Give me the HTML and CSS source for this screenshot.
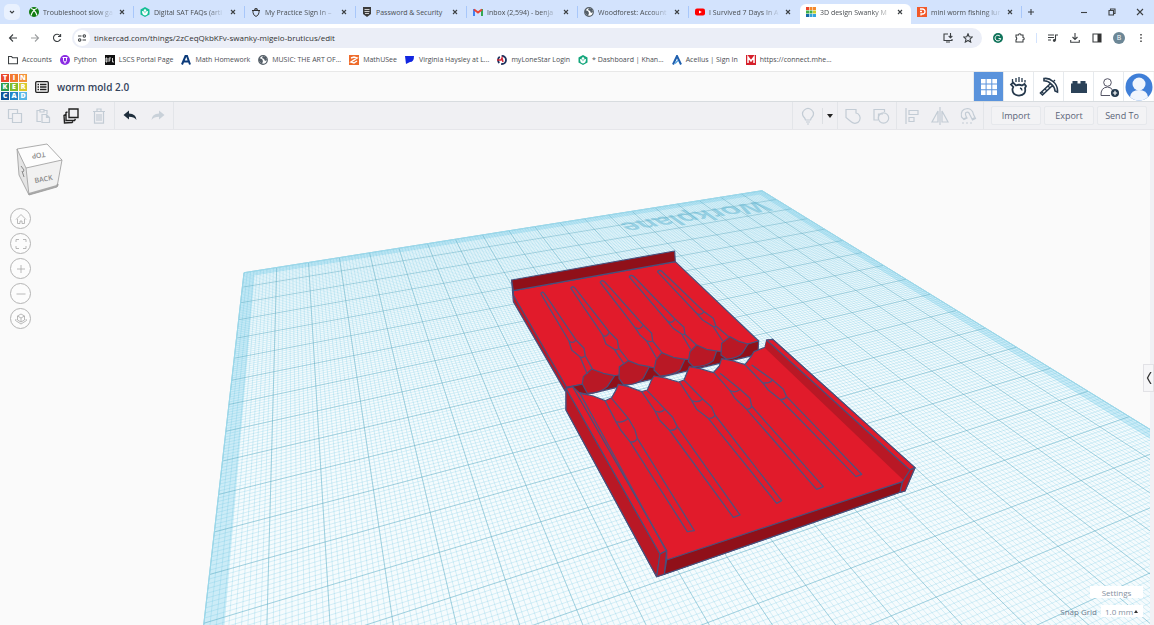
FILE: index.html
```
<!DOCTYPE html>
<html lang="en">
<head>
    <meta charset="UTF-8">
    <title>3D design Swanky Migelo-Bruticus</title>
    <link rel="stylesheet" href="styles.css">
</head>
<body>
    <!-- browser tabs -->
    <div class="tabs">
        <button class="tab_list" aria-label="Search tabs"><svg class="ic8" viewBox="0 0 8 8"><path d="M2 3l2 2 2-2" class="ln"/></svg></button>
        <div class="tab">
            <svg class="ic10" viewBox="0 0 10 10"><circle cx="5" cy="5" r="5" fill="#107c10"/><path d="M2 1.500Q4 2 5 3 6 2 8 1.500M2 8.500Q3 5 5 3.500 7 5 8 8.500" fill="none" stroke="#fff" stroke-width="1.200"/></svg>
            <a href="#" class="tab_name">Troubleshoot slow ga</a><button class="close" aria-label="Close"><svg class="ic8" viewBox="0 0 8 8"><path d="M2 2l4 4M6 2L2 6" class="ln"/></svg></button>
        </div>
        <div class="tab">
            <svg class="ic10" viewBox="0 0 10 10"><path d="M5 0l4.500 2.500v5L5 10 .5 7.500v-5z" fill="#14bf96"/><circle cx="5" cy="3.500" r="1.300" fill="#fff"/><path d="M2 4q3 0 3 3 0-3 3-3 0 4-3 4.500Q2 8 2 4" fill="#fff"/></svg>
            <a href="#" class="tab_name">Digital SAT FAQs (arti</a><button class="close" aria-label="Close"><svg class="ic8" viewBox="0 0 8 8"><path d="M2 2l4 4M6 2L2 6" class="ln"/></svg></button>
        </div>
        <div class="tab">
            <svg class="ic10" viewBox="0 0 10 10"><path d="M2 3.500h6v2Q8 8 5 9.500 2 8 2 5.500zM1 3.500h8M5 3.500V1M3 2.500Q5 .5 7 2.500" fill="none" stroke="#333" stroke-width="1"/></svg>
            <a href="#" class="tab_name">My Practice Sign In –</a><button class="close" aria-label="Close"><svg class="ic8" viewBox="0 0 8 8"><path d="M2 2l4 4M6 2L2 6" class="ln"/></svg></button>
        </div>
        <div class="tab">
            <svg class="ic10" viewBox="0 0 10 10"><path d="M1 0h8v7L5 10 1 7z" fill="#3c3c3c"/><path d="M2.500 2.500h5M2.500 4.500h5M3 6.500h4" stroke="#ccc"/></svg>
            <a href="#" class="tab_name plain">Password &amp; Security</a><button class="close" aria-label="Close"><svg class="ic8" viewBox="0 0 8 8"><path d="M2 2l4 4M6 2L2 6" class="ln"/></svg></button>
        </div>
        <div class="tab">
            <svg class="ic10" viewBox="0 0 10 10"><path d="M1 9V2" stroke="#4285f4" stroke-width="2"/><path d="M9 9V2" stroke="#34a853" stroke-width="2"/><path d="M1 2.500l4 3 4-3" fill="none" stroke="#ea4335" stroke-width="2"/></svg>
            <a href="#" class="tab_name">Inbox (2,594) - benja</a><button class="close" aria-label="Close"><svg class="ic8" viewBox="0 0 8 8"><path d="M2 2l4 4M6 2L2 6" class="ln"/></svg></button>
        </div>
        <div class="tab">
            <svg class="ic10" viewBox="0 0 10 10"><circle cx="5" cy="5" r="4.300" fill="#fff" stroke="#555f68" stroke-width="1.200"/><path d="M1 3l3 1 1 2-1 3-3-3zM5 1l3 1 1 3-2 1-1-2-2-1z" fill="#555f68"/></svg>
            <a href="#" class="tab_name">Woodforest: Account</a><button class="close" aria-label="Close"><svg class="ic8" viewBox="0 0 8 8"><path d="M2 2l4 4M6 2L2 6" class="ln"/></svg></button>
        </div>
        <div class="tab">
            <svg class="ic10" viewBox="0 0 10 10"><rect y="1.500" width="10" height="7" rx="2" fill="#f00"/><path d="M4 3.500v3L6.800 5z" fill="#fff"/></svg>
            <a href="#" class="tab_name">I Survived 7 Days In A</a><button class="close" aria-label="Close"><svg class="ic8" viewBox="0 0 8 8"><path d="M2 2l4 4M6 2L2 6" class="ln"/></svg></button>
        </div>
        <div class="tab active">
            <svg class="ic10" viewBox="0 0 10 10"><path d="M0 0h3v3H0z" fill="#e8452c"/><path d="M3.500 0h3v3h-3zM7 0h3v3H7z" fill="#f48a2d"/><path d="M0 3.500h3v3H0zM3.500 3.500h3v3h-3z" fill="#3fae49"/><path d="M7 3.500h3v3H7z" fill="#c9ce2c"/><path d="M0 7h3v3H0z" fill="#1569a8"/><path d="M3.500 7h3v3h-3zM7 7h3v3H7z" fill="#35a3dc"/></svg>
            <a href="#" class="tab_name">3D design Swanky M</a><button class="close" aria-label="Close"><svg class="ic8" viewBox="0 0 8 8"><path d="M2 2l4 4M6 2L2 6" class="ln"/></svg></button>
        </div>
        <div class="tab last">
            <svg class="ic10" viewBox="0 0 10 10"><path d="M0 0h10v10H0z" fill="#f1592a"/><path d="M3 2h2.500a2.500 2.500 0 010 5H4v1.500M3 4.500h2" fill="none" stroke="#fff" stroke-width="1.300"/></svg>
            <a href="#" class="tab_name">mini worm fishing lur</a><button class="close" aria-label="Close"><svg class="ic8" viewBox="0 0 8 8"><path d="M2 2l4 4M6 2L2 6" class="ln"/></svg></button>
        </div>
        <button class="new_tab" aria-label="New tab"><svg class="ic8" viewBox="0 0 8 8"><path d="M4 1v6M1 4h6" class="ln"/></svg></button>
        <div class="win">
            <button aria-label="Minimize"><svg class="ic8" viewBox="0 0 8 8"><path d="M1 4.500h6" class="ln"/></svg></button>
            <button aria-label="Restore"><svg class="ic8" viewBox="0 0 8 8"><path d="M1 2.500h4.500V7H1zM2.500 2.500V1H7v4.500H5.500" class="ln"/></svg></button>
            <button aria-label="Close window"><svg class="ic8" viewBox="0 0 8 8"><path d="M1 1l6 6M7 1L1 7" class="ln"/></svg></button>
        </div>
    </div>

    <!-- address bar -->
    <div class="nav">
        <button aria-label="Back"><svg class="ic10" viewBox="0 0 10 10"><path d="M9 5H1.500M5 1.500L1.500 5 5 8.500" class="ln"/></svg></button>
        <button aria-label="Forward"><svg class="ic10 pale" viewBox="0 0 10 10"><path d="M1 5h7.500M5 1.500L8.500 5 5 8.500" class="ln"/></svg></button>
        <button aria-label="Reload"><svg class="ic10" viewBox="0 0 10 10"><path d="M8.500 6A3.600 3.600 0 118 2.800M8.600 1v2.500H6" class="ln"/></svg></button>
        <div class="omnibox">
            <span class="site"><svg class="ic10" viewBox="0 0 10 10"><path d="M1 3h3.500M5.500 7H9" class="ln"/><circle cx="7.300" cy="3" r="1.200" class="ln"/><circle cx="2.700" cy="7" r="1.200" class="ln"/></svg></span>
            <input class="url" type="text" aria-label="Address" value="tinkercad.com/things/2zCeqQkbKFv-swanky-migelo-bruticus/edit">
            <button aria-label="Install"><svg class="ic10" viewBox="0 0 10 10"><path d="M5 1H1v6.500h8V6M3 9h4M7.500 0v4.500M5.700 3l1.800 1.800L9.300 3" class="ln"/></svg></button>
            <button aria-label="Bookmark"><svg class="ic10" viewBox="0 0 10 10"><path d="M5 .8l1.200 2.900 3.100.3L7 6.100l.7 3L5 7.500 2.300 9.100l.7-3L.7 4l3.100-.3z" class="ln"/></svg></button>
        </div>
        <div class="ext">
            <button aria-label="Grammarly"><svg class="ic10" viewBox="0 0 10 10"><circle cx="5" cy="5" r="5" fill="#11745b"/><path d="M7 3.200A2.800 2.800 0 107.700 5.500H5.500" fill="none" stroke="#fff"/></svg></button>
            <button aria-label="Extensions"><svg class="ic10" viewBox="0 0 10 10"><path d="M1 2h2.500a1.200 1.200 0 012.500 0H8v2.500a1.200 1.200 0 010 2.400V9H1V7q1.500-1.500 0-3z" class="ln"/></svg></button>
            <i class="bar"></i>
            <button aria-label="Media"><svg class="ic10" viewBox="0 0 10 10"><path d="M0 2h6M0 4.500h6M0 7h3M7.500 7.500V2H10" class="ln"/><circle cx="6.300" cy="7.500" r="1.400" fill="#3c4043"/></svg></button>
            <button aria-label="Downloads"><svg class="ic10" viewBox="0 0 10 10"><path d="M5 0v6.500M2.500 4L5 6.500 7.500 4M.7 7v2.300h8.600V7" class="ln"/></svg></button>
            <button aria-label="Side panel"><svg class="ic10" viewBox="0 0 10 10"><path d="M1 1h8v8H1z" class="ln"/><path d="M5.500 1H9v8H5.500z" fill="#333"/></svg></button>
            <button class="profile" aria-label="Profile">B</button>
            <button aria-label="Menu"><svg class="ic10" viewBox="0 0 10 10"><path d="M4.300 1h1.400v1.400H4.300zM4.300 4.300h1.400v1.400H4.300zM4.300 7.600h1.400V9H4.300z" fill="#333"/></svg></button>
        </div>
    </div>

    <!-- bookmarks -->
    <div class="marks">
        <a href="#"><svg class="ic10" viewBox="0 0 10 10"><path d="M.5 1.500h3l1 1.200h5v6h-9z" class="ln"/></svg>Accounts</a>
        <a href="#"><svg class="ic10" viewBox="0 0 10 10"><circle cx="5" cy="5" r="5" fill="#8a2be2"/><path d="M3.500 3v2.500a1.500 1.500 0 003 0V3M5 7v1.500M2.500 2.500h5" fill="none" stroke="#fff"/></svg>Python</a>
        <a href="#"><svg class="ic10" viewBox="0 0 10 10"><path d="M0 0h10v10H0z" fill="#111"/><path d="M1 3v4h1V3zM4 7V3h2M4 5h1.500M7.500 3v4H9" fill="none" stroke="#fff" stroke-width=".8"/></svg>LSCS Portal Page</a>
        <a href="#"><svg class="ic10" viewBox="0 0 10 10"><path d="M1 9.500L4.500 1h1.500L9 9.500M2.500 6.500H8" fill="none" stroke="#0b3a7a" stroke-width="2"/></svg>Math Homework</a>
        <a href="#"><svg class="ic10" viewBox="0 0 10 10"><circle cx="5" cy="5" r="4.300" fill="#fff" stroke="#555f68" stroke-width="1.200"/><path d="M1 3l3 1 1 2-1 3-3-3zM5 1l3 1 1 3-2 1-1-2-2-1z" fill="#555f68"/></svg>MUSIC: THE ART OF...</a>
        <a href="#"><svg class="ic10" viewBox="0 0 10 10"><path d="M0 0h10v10H0z" fill="#ee6c2c"/><path d="M2 3l3-1 3 1-6 4 3 1 3-2" fill="none" stroke="#fff" stroke-width="1.500"/></svg>MathUSee</a>
        <a href="#"><svg class="ic10" viewBox="0 0 10 10"><path d="M0 1h9q0 6-4 6l-4 2z" fill="#1226e0"/></svg>Virginia Haysley at L...</a>
        <a href="#"><svg class="ic10" viewBox="0 0 10 10"><circle cx="5" cy="5" r="4" fill="none" stroke="#1b2f5c" stroke-width="1.800" stroke-dasharray="7 2"/><path d="M0 5h4l1-2 1 4" stroke="#d22b3a" stroke-width="1.500" fill="none"/></svg>myLoneStar Login</a>
        <a href="#"><svg class="ic10" viewBox="0 0 10 10"><path d="M5 0l4.500 2.500v5L5 10 .5 7.500v-5z" fill="#14a67c"/><circle cx="5" cy="3.500" r="1.300" fill="#fff"/><path d="M2 4q3 0 3 3 0-3 3-3 0 4-3 4.500Q2 8 2 4" fill="#fff"/></svg>* Dashboard | Khan...</a>
        <a href="#"><svg class="ic10" viewBox="0 0 10 10"><path d="M1 9.500L5 1l4 8.500" fill="none" stroke="#1f5fae" stroke-width="2"/><path d="M3 8.500l3-3" stroke="#4ba0e0" stroke-width="1.300"/></svg>Acellus | Sign In</a>
        <a href="#"><svg class="ic10" viewBox="0 0 10 10"><path d="M0 0h10v10H0z" fill="#d6202b"/><path d="M2 8V2l3 4 3-4v6" fill="none" stroke="#fff" stroke-width="1.500"/></svg>https://connect.mhe...</a>
    </div>

    <!-- tinkercad header -->
    <header class="top">
        <div class="logo">
            <span class="t1">T</span><span class="t2">I</span><span class="t3">N</span>
            <span class="t4">K</span><span class="t5">E</span><span class="t6">R</span>
            <span class="t7">C</span><span class="t8">A</span><span class="t9">D</span>
        </div>
        <button class="list" aria-label="Designs"><svg class="ic14" viewBox="0 0 14 12"><rect x=".7" y=".7" width="12.600" height="10.600" rx="1" fill="none" stroke="#222" stroke-width="1.300"/><path d="M2.500 3.500H4M2.500 6H4M2.500 8.500H4M5 3.500h6.500M5 6h6.500M5 8.500h6.500" stroke="#222" stroke-width="1.300"/></svg></button>
        <h1 class="title">worm mold 2.0</h1>
        <div class="modes">
            <button class="on" aria-label="3D view"><svg class="ic16" viewBox="0 0 16 16"><path d="M0 0h4.600v4.600H0zM5.600 0h4.700v4.600H5.600zM11.300 0H16v4.600h-4.700zM0 5.600h4.600v4.700H0zM5.600 5.600h4.700v4.700H5.600zM11.300 5.600H16v4.700h-4.700zM0 11.300h4.600V16H0zM5.600 11.300h4.700V16H5.600zM11.300 11.300H16V16h-4.700z" fill="#fff"/></svg></button>
            <button aria-label="Sim lab"><svg class="ic20" viewBox="0 0 20 20"><path d="M7 8.500q3-1.500 6 0l2.500-1.500 1.500 2-1 2q1.500 7-6 7.700-7-.7-6.500-6.700l.8-2-2.300-2.500L4 5.500z" fill="none" stroke="#26394d" stroke-width="1.800"/><path d="M10 0v5M7 1v4M13 1v4M3.500 2v3M16 3v2.500M11 11q2 .5 2 2.500" fill="none" stroke="#26394d" stroke-width="1.300"/></svg></button>
            <button aria-label="Blocks"><svg class="ic20" viewBox="0 0 20 20"><path d="M5 1.500q5-.8 9 3 5 4 4.500 10.500l-2.500-1Q15.500 9.500 12 7 9.500 4 5 3.800zM11 7L1.500 16l2 2L13.500 8.500" fill="#fff" stroke="#26394d" stroke-width="1.600"/><path d="M3 15l2 2M6 12l2 2M9 9l2 2M14 5l2-2" stroke="#26394d" stroke-width="1.200"/></svg></button>
            <button aria-label="Bricks"><svg class="ic16" viewBox="0 0 16 16"><path d="M0 14V4.500h1.500V2h5v2.500h3V2h5v2.500H16V14z" fill="#2b4258"/></svg></button>
            <button aria-label="Invite"><svg class="ic20" viewBox="0 0 20 20"><circle cx="8.500" cy="5.500" r="3.800" fill="none" stroke="#556" stroke-width="1"/><path d="M11 18.500H2q-.5-8 6.500-8.500 4 0 5.500 4" fill="none" stroke="#556" stroke-width="1"/><circle cx="16" cy="16" r="4" fill="#22384c"/><path d="M16 13.800v4.400M13.800 16h4.400" stroke="#fff" stroke-width="1.200"/></svg></button>
            <button class="avatar" aria-label="Account"><svg class="ic28" viewBox="0 0 28 28"><circle cx="14" cy="14" r="13.500" fill="#3f7fd8"/><circle cx="14" cy="11" r="6.500" fill="#f0f5fd"/><path d="M5 24q1-7 9-7t9 7q-4 3.500-9 3.500T5 24" fill="#f0f5fd"/></svg></button>
        </div>
    </header>

    <!-- edit toolbar -->
    <div class="tools">
        <div class="group">
            <button aria-label="Copy"><svg class="ic16 off" viewBox="0 0 16 16"><path d="M5.500 5.500h9v9h-9zM5 10.500H1.500v-9h9V5"/></svg></button>
            <button aria-label="Paste"><svg class="ic16 off" viewBox="0 0 16 16"><path d="M6 13.500H2v-11h3M9 2.500h3V6M5 1.500h4v2.500H5zM7 6.500h4.500l3 3v5H7zM11.500 6.500v3h3"/></svg></button>
            <button aria-label="Duplicate"><svg class="ic16" viewBox="0 0 16 16"><path d="M6 1h9v8.500H6zM4.500 4L3 4.500v8h8.500l1-1.500M3 6.500l-2 1 .5 7.500 7.500-.5 1-1" fill="none" stroke="#222" stroke-width="1.400"/></svg></button>
            <button aria-label="Delete"><svg class="ic16 off" viewBox="0 0 16 16"><path d="M2 3.500h12M6 3V1h4v2M3.500 3.500v11.700h9V3.500M6 6v7M8 6v7M10 6v7"/></svg></button>
        </div>
        <div class="group">
            <button aria-label="Undo"><svg class="ic16" viewBox="0 0 16 16"><path d="M1.500 7L7 2.500v3q7 0 7.500 6.500Q12 8.800 7 8.800v2.700z" fill="#1f2e3c"/></svg></button>
            <button aria-label="Redo"><svg class="ic16" viewBox="0 0 16 16"><path d="M14.500 7L9 2.500v3Q2 5.500 1.500 12 4 8.800 9 8.800v2.700z" fill="#c9d1d9"/></svg></button>
        </div>
        <div class="group right">
            <button aria-label="Show hidden"><svg class="ic18 off" viewBox="0 0 18 18"><path d="M6.500 13Q6 11 4.600 9.800A5.300 5.300 0 1113.400 9.800Q12 11 11.500 13zM7 15h4M8 17h2"/></svg></button>
            <button class="caret" aria-label="More"><svg class="ic8" viewBox="0 0 8 8"><path d="M1 2h6L4 6z" fill="#222"/></svg></button>
        </div>
        <div class="group">
            <button aria-label="Group"><svg class="ic18 off" viewBox="0 0 18 18"><path d="M2 2.500h10V6a5.200 5.200 0 11-4.500 9L5 13 2 10.500z"/></svg></button>
            <button aria-label="Ungroup"><svg class="ic18 off" viewBox="0 0 18 18"><path d="M6 13H2V2.500h10.500V5M6.500 13V7H11"/><circle cx="11.500" cy="11" r="5.200"/></svg></button>
        </div>
        <div class="group">
            <button aria-label="Align"><svg class="ic18 off" viewBox="0 0 18 18"><path d="M3 1v16M6 3.500h9v4H6zM6 10.500h5v4H6z"/></svg></button>
            <button aria-label="Mirror"><svg class="ic18 off" viewBox="0 0 18 18"><path d="M9 0v18M7 4v11H1zM11 4v11h6z"/></svg></button>
            <button aria-label="Cruise"><svg class="ic18 off" viewBox="0 0 18 18"><path d="M5 12.500L2.500 10Q1 2 8.500 1.500q5 .5 6 6l2 4-3 1.500-2.500-5Q9.500 4 7 5.500q-1.500 1.500 1 5.500zM4.500 12l3-1.500M13 12l3-1.500"/><path d="M3 16h12" stroke-dasharray="2 2"/></svg></button>
        </div>
        <div class="acts">
            <button>Import</button><button>Export</button><button>Send To</button>
        </div>
    </div>

    <main class="view">
        <svg class="scene" viewBox="0 130 1150 495" preserveAspectRatio="xMidYMin slice">
            <path id="plane" class="plane"/>
            <path id="band" class="band"/>
            <path id="minor" class="minor"/>
            <path id="major" class="major"/>
            <path id="edge" class="edge"/>
            <text class="wp" transform="matrix(-1 .16 -.7 -.48 760 201)">Workplane</text>

            <!-- back half of the mold -->
            <g class="part" transform="translate(500 240) scale(.3333)">
                <path class="mid" d="M35 120L40 185 195 452 235 460 245 432 40 152z"/>
                <path class="red" d="M40 152L526 65 776 303 744 312 690 340 250 432 200 442 40 165z"/>
                <path class="dark" d="M35 120L524 33 526 65 40 152z"/>
                <path class="dark" d="M200 442L250 432 340 408 355 405 445 380 463 384 553 358 568 358 650 333 665 335 744 312 776 303 774 343 262 463 225 455z"/>
                <path class="mid" d="M275 387L250 410 247 432 262 460Q300 460 322 440L344 407 310 400z"/>
                <path class="mid" d="M385 362L358 380 357 415 370 433Q405 438 430 415L448 380 415 374z"/>
                <path class="mid" d="M485 338L468 360 462 390 480 408Q520 406 540 390L555 358 520 352z"/>
                <path class="mid" d="M590 315L570 335 565 365 580 380Q620 380 640 362L650 333 620 328z"/>
                <path class="mid" d="M690 290L665 310 663 345 680 357Q715 355 728 338L744 312 716 304z"/>
                <path class="cut" d="M122 160L207 303 215 330 240 350 262 402M133 160L228 300 252 325 256 348 278 388M122 160l6-4 5 4M207 303q12 10 21-3M238 350q10 6 18-3"/>
                <path class="cut" d="M212 144L308 285 318 312 343 328 372 372M224 143L328 276 352 300 356 325 385 362M212 144l6-4 6 3M308 285q12 10 20-9M343 328q8 4 13-3"/>
                <path class="cut" d="M300 126L405 262 420 285 440 303 470 355M313 124L430 255 455 280 458 303 486 338M300 126l6-4 7 2M405 262q14 10 25-7M440 303q10 4 18 0"/>
                <path class="cut" d="M387 110L502 243 520 265 545 282 572 328M400 108L525 237 552 262 555 283 590 316M387 110l6-4 7 2M502 243q14 10 23-6M545 282q4 2 10 1"/>
                <path class="cut" d="M472 95L590 220 608 240 640 260 668 303M485 93L612 215 640 235 648 258 688 292M472 95l6-4 7 2M590 220q14 8 22-5M640 260h8"/>
            </g>

            <!-- front half of the mold -->
            <g class="part" transform="translate(550 330) scale(.3333)">
                <path class="red" d="M48 175L68 170 90 190 130 198 165 212 185 203 197 182 205 163 235 170 275 185 292 180 303 154 312 138 345 144 385 156 402 150 412 125 418 110 450 116 490 128 508 108 515 86 550 93 585 104 603 80 612 65 645 52 650 30 668 28 1095 413 1065 483 1050 487 343 733 320 740 48 240z"/>
                <path class="mid" d="M48 175L48 240 320 740 330 672z"/>
                <path class="red" d="M48 175L68 170 350 662 330 672z"/>
                <path class="cut" d="M90 190L350 665M350 665V690"/>
                <path class="mid" d="M330 672L350 662 343 733 320 740z"/>
                <path class="dark" d="M350 690L1058 455 1050 487 343 733z"/>
                <path class="mid flat" d="M650 30L1080 420 1060 450 645 54z"/>
                <path class="red" d="M650 30L668 28 1095 413 1080 420z"/>
                <path class="mid" d="M1080 420L1095 413 1065 483 1050 487 1058 455z"/>
                <path class="cut" d="M165 212L198 275 212 300 240 335 412 605 433 602 262 325 255 300 235 265 185 205M198 275q20 5 37-10M240 335q14 4 22-10"/>
                <path class="cut" d="M275 185L315 243 328 270 358 300 550 562 570 555 382 290 368 262 345 238 292 182M315 243q18 8 30-5M358 300q16 4 24-10"/>
                <path class="cut" d="M388 155L425 212 440 238 475 265 680 520 695 512 495 255 485 232 458 207 402 150M425 212q20 8 33-5M475 265q14 2 20-10"/>
                <path class="cut" d="M492 128L540 182 555 205 590 238 800 478 820 470 605 228 600 205 570 178 510 130M540 182q18 8 30-4M590 238q12 0 15-10"/>
                <path class="cut" d="M585 104L638 158 655 180 690 208 918 440 935 433 710 200 700 178 668 150 605 105M638 158q18 4 30-8M690 208q14 2 20-8"/>
            </g>
        </svg>

        <div class="side">
            <svg class="cube" viewBox="0 0 50 56">
                <path d="M3 6L33 1 48 17 12 25z" fill="#fdfdfd"/>
                <path d="M12 25L48 17 43 44 15 52z" fill="#f1f1f1"/>
                <path d="M3 6L12 25 15 52 5 32z" fill="#e4e4e4"/>
                <path d="M15 51L43 43 44 41" stroke="#aaa" stroke-width="2" fill="none"/>
                <path d="M3 6L33 1 48 17 43 44 15 52 5 32zM12 25L48 17M12 25L15 52M3 6L12 25" fill="none" stroke="#999" stroke-width=".8"/>
                <text transform="translate(31 9) rotate(172)">TOP</text>
                <text class="back" transform="translate(21 40) rotate(-10)">BACK</text>
                <path d="M7 23l3 4-1 2M8 28l2 6" stroke="#888" fill="none"/>
            </svg>
            <button aria-label="Home view"><svg class="ic12" viewBox="0 0 12 12"><path d="M1 6.500L6 1.500l5 5M2.500 6v4.500H5V8h2v2.500h2.500V6"/></svg></button>
            <button aria-label="Fit all"><svg class="ic12" viewBox="0 0 12 12"><path d="M1 4V1.500h3M8 1.500h3V4M11 8v2.500H8M4 10.500H1V8"/></svg></button>
            <button aria-label="Zoom in"><svg class="ic12" viewBox="0 0 12 12"><path d="M6 2v8M2 6h8"/></svg></button>
            <button aria-label="Zoom out"><svg class="ic12" viewBox="0 0 12 12"><path d="M1.500 6h9"/></svg></button>
            <button aria-label="Flat view"><svg class="ic12" viewBox="0 0 12 12"><path d="M6 1l3.500 2v4L6 9 2.500 7V3zM2.500 3L6 5l3.500-2M6 5v4M1 6l-.5 1.500L6 11l5.500-3.500L11 6"/></svg></button>
        </div>

        <button class="drawer" aria-label="Open shapes"><svg class="ic12" viewBox="0 0 12 12"><path d="M8 0Q6 3 4.500 6 6 9 8 12"/></svg></button>

        <div class="snap">
            <button class="settings">Settings</button>
            <label for="grid">Snap Grid</label>
            <select id="grid" class="grid"><option>1.0 mm</option></select>
            <svg class="up" viewBox="0 0 4 3"><path d="M0 3L2 0l2 3z" fill="#333"/></svg>
        </div>
    </main>

    <script>
        // perspective of the workplane, u and v run from 0 to 20
        function project(u, v){
            let w = 0.014 * u - 0.0372 * v + 1;
            let x = (36.57 * u - 10.67 * v + 244) / w;
            let y = (-1.43 * u + 3.78 * v + 272.7) / w;
            return x.toFixed(2) + ' ' + y.toFixed(2);
        }

        function line(u1, v1, u2, v2){
            return 'M' + project(u1, v1) + 'L' + project(u2, v2);
        }

        function quad(u1, v1, u2, v2){
            return 'M' + project(u1, v1) + 'L' + project(u2, v1) + 'L' + project(u2, v2) + 'L' + project(u1, v2) + 'z';
        }

        function lines(step){
            let d = '';
            for(let i = 0; i <= 20 / step; i++){
                d += line(i * step, 0, i * step, 20) + line(0, i * step, 20, i * step);
            }
            return d;
        }

        function draw(id, d){
            document.getElementById(id).setAttribute('d', d);
        }

        draw('plane', quad(0, 0, 20, 20));
        draw('band', quad(0, 0, 0.33, 20) + quad(19.67, 0, 20, 20) + quad(0.33, 0, 19.67, 0.33));
        draw('minor', lines(0.1));
        draw('major', lines(1));
        draw('edge', quad(0, 0, 20, 20));
    </script>
</body>
</html>
```

FILE: styles.css
```
*{
    box-sizing: border-box;
}

html, body{
    height: 100%;
}

body{
    margin: 0;
    display: flex;
    flex-direction: column;
    overflow: hidden;
    background-color: #fafafa;
    color: #4a4e52;
    font-family: "Open Sans", "Noto Sans", sans-serif;
    font-size: 7px;
}

button{
    border: 0;
    padding: 0;
    background: none;
    color: inherit;
    font: inherit;
    display: flex;
    align-items: center;
    justify-content: center;
}

a{
    color: inherit;
    text-decoration: none;
}

svg{
    display: block;
    flex: none;
}

.ic8{ width: 8px; height: 8px; }
.ic10{ width: 10px; height: 10px; }
.ic12{ width: 12px; height: 12px; }
.ic14{ width: 14px; height: 12px; }
.ic16{ width: 16px; height: 16px; }
.ic18{ width: 18px; height: 18px; }
.ic20{ width: 20px; height: 20px; }
.ic28{ width: 28px; height: 28px; }

.ln{
    fill: none;
    stroke: #3c4043;
    stroke-width: 1.1;
}

.pale{
    opacity: .5;
}

/* tabs */
.tabs{
    display: flex;
    align-items: center;
    height: 24px;
    padding-left: 4px;
    background-color: #d3e3fd;
}

.tab_list{
    width: 16px;
    height: 16px;
    margin-right: 3px;
    border-radius: 5px;
    background-color: #e9f1fe;
}

.tab{
    flex: 0 1 111px;
    min-width: 0;
    height: 12px;
    padding: 0 7px 0 6px;
    display: flex;
    align-items: center;
    gap: 4px;
    border-right: 1px solid #a8c7fa;
}

.tab_name{
    flex: 1;
    min-width: 0;
    overflow: hidden;
    white-space: nowrap;
    -webkit-mask-image: linear-gradient(to right, #000 75%, transparent);
    mask-image: linear-gradient(to right, #000 75%, transparent);
}

.plain{
    -webkit-mask-image: none;
    mask-image: none;
}

.close{
    width: 8px;
    height: 8px;
}

.tab:nth-child(8){
    border-color: transparent;
}

.active{
    height: 20px;
    align-self: flex-end;
    padding-bottom: 4px;
    border: 0;
    border-radius: 6px 6px 0 0;
    background-color: #fff;
}

.new_tab{
    width: 18px;
    height: 16px;
}

.win{
    margin-left: auto;
    display: flex;
}

.win button{
    width: 28px;
    height: 24px;
}

/* address bar */
.nav{
    display: flex;
    align-items: center;
    height: 27px;
    padding: 0 2px;
    background-color: #fff;
}

.nav > button{
    width: 22px;
    height: 20px;
}

.omnibox{
    flex: 1;
    display: flex;
    align-items: center;
    height: 20px;
    margin-left: 4px;
    padding: 0 4px 0 2px;
    border-radius: 10px;
    background-color: #ebeef7;
}

.site{
    width: 16px;
    height: 16px;
    border-radius: 8px;
    background-color: #fff;
    display: flex;
    align-items: center;
    justify-content: center;
}

.url{
    flex: 1;
    min-width: 0;
    border: 0;
    padding: 0 4px;
    background: none;
    color: #333;
    font-family: inherit;
    font-size: 8px;
}

.omnibox button{
    width: 20px;
}

.ext{
    display: flex;
    align-items: center;
    padding-left: 5px;
}

.ext button{
    width: 22px;
}

.ext .profile{
    width: 12px;
    height: 12px;
    margin: 0 5px;
    border-radius: 6px;
    background-color: #6c8796;
    color: #fff;
}

.bar{
    width: 1px;
    height: 10px;
    margin: 0 5px;
    background-color: #d3e3fd;
}

/* bookmarks */
.marks{
    display: flex;
    align-items: center;
    gap: 8px;
    height: 21px;
    padding: 0 8px 3px;
    background-color: #fff;
    border-bottom: 1px solid #e8e8e8;
    white-space: nowrap;
}

.marks a{
    display: flex;
    align-items: center;
    gap: 4px;
}

/* header */
.top{
    display: flex;
    align-items: center;
    height: 30px;
    padding-right: 1px;
    background-color: #fafafa;
    border-bottom: 1px solid #d8dcdf;
}

.logo{
    display: grid;
    grid-template-columns: repeat(3, 8px);
    grid-auto-rows: 8px;
    gap: 1px;
    padding-left: 1px;
    color: #fff;
    font-size: 7px;
    font-weight: 800;
    line-height: 8px;
    text-align: center;
}

.t1{ background-color: #e9482b; }
.t2{ background-color: #f2792f; }
.t3{ background-color: #f4923a; }
.t4{ background-color: #2f9e4b; }
.t5{ background-color: #80bc2c; }
.t6{ background-color: #d9c92c; }
.t7{ background-color: #12559a; }
.t8{ background-color: #2386c8; }
.t9{ background-color: #59b8e6; }

.list{
    margin-left: 8px;
}

.title{
    margin: 0 0 0 8px;
    color: #33435c;
    font-size: 10px;
    font-weight: 600;
}

.modes{
    display: flex;
    margin-left: auto;
}

.modes button{
    width: 30px;
    height: 29px;
    background-color: #fff;
    border-left: 1px solid #e6eaee;
}

.modes .on{
    background-color: #5a93dc;
}

/* toolbar */
.tools{
    display: flex;
    height: 28px;
    background-color: #f0f0f3;
    border-bottom: 1px solid #e6e6ea;
}

.group{
    display: flex;
    align-items: center;
    padding: 0 1px;
    border-right: 1px solid #e3e5e9;
}

.group button{
    width: 28px;
    height: 27px;
}

.off{
    fill: none;
    stroke: #c3ccd5;
    stroke-width: 1.2;
}

.right{
    margin-left: auto;
    border-left: 1px solid #e3e5e9;
}

.group .caret{
    width: 14px;
    height: 16px;
    border-left: 1px solid #dcdfe3;
}

.acts{
    display: flex;
    align-items: center;
    gap: 3px;
    padding: 0 7px;
}

.acts button{
    width: 50px;
    height: 19px;
    border: 1px solid #e6e8ec;
    border-radius: 2px;
    background-color: #f3f3f5;
    color: #5a6378;
    font-size: 9px;
}

/* 3d view */
.view{
    flex: 1;
    min-height: 0;
    position: relative;
    border-right: 4px solid #f1f1f5;
    background-color: #fafafa;
}

.scene{
    position: absolute;
    top: 0;
    left: 0;
    width: 100%;
    height: 100%;
}

.plane{
    fill: #f5fbfd;
}

.band{
    fill: #8fd8ee;
    fill-opacity: .4;
}

.minor, .major, .edge{
    fill: none;
}

.minor{
    stroke: #50bcde;
    stroke-width: .35;
    stroke-opacity: .6;
}

.major{
    stroke: #5fa9bd;
    stroke-width: .7;
    stroke-opacity: .6;
}

.edge{
    stroke: #9ad9ec;
    stroke-width: 1;
}

.wp{
    fill: #5fb4d0;
    fill-opacity: .5;
    font-family: "Liberation Sans", sans-serif;
    font-size: 28px;
    font-weight: 700;
}

.part path{
    stroke: #47507c;
    stroke-width: 3.5;
    stroke-linejoin: round;
}

.part .red{ fill: #e11b2b; }
.part .mid{ fill: #b91825; }
.part .dark{ fill: #901019; }
.part .flat{ stroke: none; }

.part .cut{
    fill: none;
    stroke: #54507c;
    stroke-width: 4;
}

.side{
    position: relative;
    width: 64px;
    padding: 13px 0 0 10px;
    display: flex;
    flex-direction: column;
    gap: 4px;
}

.cube{
    width: 50px;
    height: 56px;
    margin: 0 0 5px 4px;
}

.cube text{
    fill: #8a8a8a;
    font-size: 7px;
    font-weight: 600;
}

.side button{
    width: 21px;
    height: 21px;
    border: 1px solid #b4b4b4;
    border-radius: 50%;
    background-color: #fcfcfc;
}

.side button path, .drawer path{
    fill: none;
    stroke: #a8a8a8;
    stroke-width: .8;
}

.drawer{
    position: absolute;
    top: 234px;
    right: -4px;
    width: 11px;
    height: 28px;
    border: 1px solid #e2e2e6;
    background-color: #f6f6f8;
}

.drawer path{
    stroke: #333;
    stroke-width: 1.3;
}

.snap{
    position: absolute;
    right: 7px;
    bottom: 8px;
    display: grid;
    grid-template-columns: auto 42px;
    align-items: center;
    gap: 7px 4px;
    color: #6d7a8d;
    font-size: 8px;
}

.settings{
    grid-column: 1 / 3;
    justify-self: end;
    width: 53px;
    height: 12px;
    background-color: #fff;
    color: #8490a0;
}

.grid{
    appearance: none;
    height: 12px;
    padding: 0 4px;
    border: 0;
    border-radius: 0;
    background-color: #fff;
    color: #8490a0;
    font-family: inherit;
    font-size: 8px;
}

.up{
    position: absolute;
    right: 5px;
    bottom: 4px;
    width: 4px;
    height: 3px;
}
```
